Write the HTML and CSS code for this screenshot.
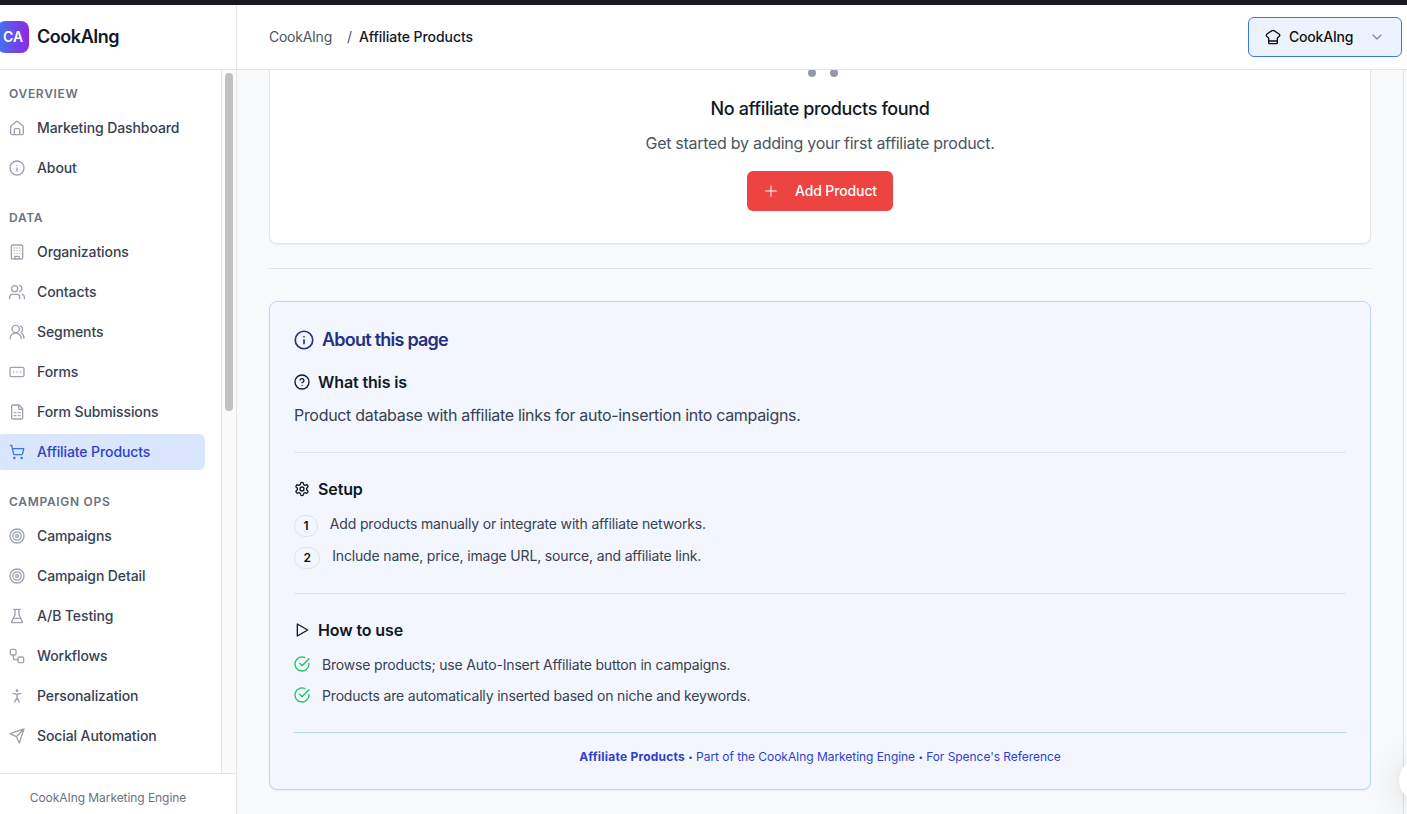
FILE: index.html
```html
<!DOCTYPE html>
<html lang="en">
<head>
<meta charset="utf-8">
<title>Affiliate Products</title>
<link rel="stylesheet" href="styles.css">
</head>
<body>
<svg class="defs" width="0" height="0">
  <symbol id="home" viewBox="0 0 24 24"><path d="M2.500 10.200a2 2 0 0 1 .8-1.6l7.500-6.200a2 2 0 0 1 2.400 0l7.500 6.200a2 2 0 0 1 .8 1.600V20a2 2 0 0 1-2 2h-15a2 2 0 0 1-2-2zM8 22v-7.500a1.500 1.500 0 0 1 1.500-1.500h5a1.500 1.500 0 0 1 1.500 1.500V22"/></symbol>
  <symbol id="info" viewBox="0 0 24 24"><circle cx="12" cy="12" r="10.500"/><path d="M12 16.500V12M12 8h.01"/></symbol>
  <symbol id="building" viewBox="0 0 24 24"><rect x="3.500" y="1.500" width="17" height="21" rx="2"/><path d="M9 22v-3.500h6V22M8 6h.01M12 6h.01M16 6h.01M8 10h.01M12 10h.01M16 10h.01M8 14h.01M12 14h.01M16 14h.01"/></symbol>
  <symbol id="users" viewBox="0 0 24 24"><path d="M16 22v-2.500a4 4 0 0 0-4-4H5a4 4 0 0 0-4 4V22M23 22v-2.500a4 4 0 0 0-3-3.870M16 2.500a4.500 4.500 0 0 1 0 8.700"/><circle cx="8.500" cy="7" r="4.500"/></symbol>
  <symbol id="segments" viewBox="0 0 24 24"><path d="M18.500 22a8.500 8.500 0 0 0-17 0M22.500 21.500c0-3.870-2-7-4.500-9a5.500 5.500 0 0 0-.450-9.300"/><circle cx="10" cy="7.500" r="5.500"/></symbol>
  <symbol id="form" viewBox="0 0 24 24"><rect x="1.500" y="5" width="21" height="14" rx="2"/><path d="M7 12h.01M12 12h.01M17 12h.01"/></symbol>
  <symbol id="sheet" viewBox="0 0 24 24"><path d="M15 1.500H6a2 2 0 0 0-2 2v17a2 2 0 0 0 2 2h12.500a2 2 0 0 0 2-2V7zM14.500 2v4a2 2 0 0 0 2 2h4M8 13h2.500M14 13h2.500M8 17.500h2.500M14 17.500h2.500"/></symbol>
  <symbol id="cart" viewBox="0 0 24 24"><circle cx="8" cy="21" r="1"/><circle cx="19" cy="21" r="1"/><path d="M2.050 2.050h2l2.660 12.420a2 2 0 0 0 2 1.580h9.780a2 2 0 0 0 1.950-1.570l1.650-7.430H5.120"/></symbol>
  <symbol id="target" viewBox="0 0 24 24"><circle cx="12" cy="12" r="10.500"/><circle cx="12" cy="12" r="6.300"/><circle cx="12" cy="12" r="2.100"/></symbol>
  <symbol id="flask" viewBox="0 0 24 24"><path d="M9 2v8L4 20.500a1 1 0 0 0 1 1.500h14a1 1 0 0 0 1-1.500L15 10V2M7 2h10M7 15.500h10"/></symbol>
  <symbol id="workflow" viewBox="0 0 24 24"><rect x="2" y="2" width="8.500" height="8.500" rx="2"/><path d="M6.500 10.500v4a3 3 0 0 0 3 3h4"/><rect x="13.500" y="13.500" width="8.500" height="8.500" rx="2"/></symbol>
  <symbol id="person" viewBox="0 0 24 24"><circle cx="12" cy="4" r="1"/><path d="m6 8 6 1.500L18 8M12 9.500v5M8.500 21l.5-1 3-5.500 3 5.500.5 1"/></symbol>
  <symbol id="send" viewBox="0 0 24 24"><path d="M22.500 1.500 15.500 22.500l-4.500-9.500-9.500-4.500zM22.500 1.500 11 13"/></symbol>
  <symbol id="chef" viewBox="0 0 24 24"><path d="M5.500 18v-4.500L2.500 11a2.500 2.500 0 0 1 .5-3.500L10 2.800a3.500 3.500 0 0 1 4 0l7 4.700a2.500 2.500 0 0 1 .5 3.500l-3 2.500V18zM5.500 18v2.500a1.500 1.500 0 0 0 1.500 1.500h10a1.500 1.500 0 0 0 1.500-1.500V18"/></symbol>
  <symbol id="chevron" viewBox="0 0 24 24"><path d="m6 9 6 6 6-6"/></symbol>
  <symbol id="plus" viewBox="0 0 24 24"><path d="M4 12h16M12 4v16"/></symbol>
  <symbol id="help" viewBox="0 0 24 24"><circle cx="12" cy="12" r="10.500"/><path d="M9.090 9a3 3 0 0 1 5.830 1c0 2-3 3-3 3M12 17h.01"/></symbol>
  <symbol id="gear" viewBox="0 0 24 24"><path d="M12.220 2h-.440a2 2 0 0 0-2 2v.180a2 2 0 0 1-1 1.730l-.430.250a2 2 0 0 1-2 0l-.150-.080a2 2 0 0 0-2.730.730l-.220.380a2 2 0 0 0 .730 2.730l.150.100a2 2 0 0 1 1 1.720v.510a2 2 0 0 1-1 1.740l-.150.090a2 2 0 0 0-.730 2.730l.220.380a2 2 0 0 0 2.730.730l.150-.080a2 2 0 0 1 2 0l.430.250a2 2 0 0 1 1 1.730V20a2 2 0 0 0 2 2h.440a2 2 0 0 0 2-2v-.180a2 2 0 0 1 1-1.730l.430-.250a2 2 0 0 1 2 0l.150.080a2 2 0 0 0 2.730-.730l.220-.390a2 2 0 0 0-.730-2.730l-.150-.080a2 2 0 0 1-1-1.740v-.500a2 2 0 0 1 1-1.740l.150-.090a2 2 0 0 0 .730-2.730l-.220-.380a2 2 0 0 0-2.730-.730l-.150.080a2 2 0 0 1-2 0l-.430-.250a2 2 0 0 1-1-1.730V4a2 2 0 0 0-2-2z"/><circle cx="12" cy="12" r="3"/></symbol>
  <symbol id="play" viewBox="0 0 24 24"><path d="M5 3v18l15.500-9z"/></symbol>
  <symbol id="check" viewBox="0 0 24 24"><path d="M22.500 11v1a10.500 10.500 0 1 1-6.200-9.600M22.500 4 12 14.500l-3.500-3.500"/></symbol>
</svg>
<div class="app">
  <div class="strip"></div>
  <aside class="sidebar">
    <div class="brand"><span class="logo">CA</span><span class="brand-name">CookAIng</span></div>
    <div class="nav-wrap">
      <nav class="nav">
        <section class="group">
          <h2 class="label">OVERVIEW</h2>
          <a class="item"><svg class="icon"><use href="#home"/></svg>Marketing Dashboard</a>
          <a class="item"><svg class="icon"><use href="#info"/></svg>About</a>
        </section>
        <section class="group">
          <h2 class="label">DATA</h2>
          <a class="item"><svg class="icon"><use href="#building"/></svg>Organizations</a>
          <a class="item"><svg class="icon"><use href="#users"/></svg>Contacts</a>
          <a class="item"><svg class="icon"><use href="#segments"/></svg>Segments</a>
          <a class="item"><svg class="icon"><use href="#form"/></svg>Forms</a>
          <a class="item"><svg class="icon"><use href="#sheet"/></svg>Form Submissions</a>
          <a class="item active"><svg class="icon"><use href="#cart"/></svg>Affiliate Products</a>
        </section>
        <section class="group">
          <h2 class="label">CAMPAIGN OPS</h2>
          <a class="item"><svg class="icon"><use href="#target"/></svg>Campaigns</a>
          <a class="item"><svg class="icon"><use href="#target"/></svg>Campaign Detail</a>
          <a class="item"><svg class="icon"><use href="#flask"/></svg>A/B Testing</a>
          <a class="item"><svg class="icon"><use href="#workflow"/></svg>Workflows</a>
          <a class="item"><svg class="icon"><use href="#person"/></svg>Personalization</a>
          <a class="item"><svg class="icon"><use href="#send"/></svg>Social Automation</a>
        </section>
      </nav>
      <div class="track"><div class="thumb"></div></div>
    </div>
    <div class="side-foot">CookAIng Marketing Engine</div>
  </aside>
  <header class="topbar">
    <div class="crumbs"><span class="crumb">CookAIng</span><span class="slash">/</span><span class="current">Affiliate Products</span></div>
    <button class="switcher"><svg class="icon"><use href="#chef"/></svg><span class="switcher-name">CookAIng</span><svg class="icon chev"><use href="#chevron"/></svg></button>
  </header>
  <div class="body">
    <main class="main">
      <section class="empty">
        <svg class="empty-icon"><use href="#cart"/></svg>
        <h3 class="empty-title">No affiliate products found</h3>
        <p class="empty-text">Get started by adding your first affiliate product.</p>
        <button class="add"><svg class="icon"><use href="#plus"/></svg><span class="add-text">Add Product</span></button>
      </section>
      <div class="divider"></div>
      <section class="about">
        <h3 class="about-title"><svg class="icon big"><use href="#info"/></svg>About this page</h3>
        <div class="block">
          <h4 class="sub"><svg class="icon"><use href="#help"/></svg>What this is</h4>
          <p class="desc">Product database with affiliate links for auto-insertion into campaigns.</p>
        </div>
        <div class="block ruled">
          <h4 class="sub"><svg class="icon"><use href="#gear"/></svg>Setup</h4>
          <div class="list">
            <div class="row"><span class="num">1</span><span>Add products manually or integrate with affiliate networks.</span></div>
            <div class="row"><span class="num">2</span><span>Include name, price, image URL, source, and affiliate link.</span></div>
          </div>
        </div>
        <div class="block ruled">
          <h4 class="sub"><svg class="icon"><use href="#play"/></svg>How to use</h4>
          <div class="list">
            <div class="row"><svg class="icon tick"><use href="#check"/></svg><span>Browse products; use Auto-Insert Affiliate button in campaigns.</span></div>
            <div class="row"><svg class="icon tick"><use href="#check"/></svg><span>Products are automatically inserted based on niche and keywords.</span></div>
          </div>
        </div>
        <footer class="about-foot"><strong>Affiliate Products</strong> <span class="dot">•</span> Part of the CookAIng Marketing Engine <span class="dot">•</span> For Spence's Reference</footer>
      </section>
    </main>
    <div class="page-track"></div>
  </div>
  <div class="bubble"></div>
</div>
</body>
</html>
```
FILE: styles.css
```css
* { box-sizing: border-box; margin: 0; }
body { font-family: Inter, sans-serif; color: #111827; overflow: hidden; }
button { font: inherit; border: 0; }
.defs { position: absolute; }
.app {
  position: relative;
  display: grid;
  grid-template: 5px 65px 744px / 237px 1170px;
  width: 1407px; height: 814px;
  overflow: hidden;
}
.strip { grid-column: 1 / 3; background: #181821; }
.icon {
  width: 16px; height: 16px; flex: none;
  fill: none; stroke: currentColor; stroke-width: 2;
  stroke-linecap: round; stroke-linejoin: round;
}

.sidebar {
  grid-row: 2 / 4;
  display: flex; flex-direction: column;
  border-right: 1px solid #e2e4e9;
  background: #fff;
  overflow: hidden;
}
.brand {
  display: flex; align-items: center; gap: 8px;
  height: 65px; flex: none;
  border-bottom: 1px solid #e2e4e9;
}
.logo {
  width: 32px; height: 32px; margin-left: -3px;
  border-radius: 8px;
  background: linear-gradient(90deg, #3f76f2, #8f27e2);
  color: #fff; font-size: 14px; font-weight: 600; line-height: 32px; text-align: center;
}
.brand-name { padding-bottom: 2px; font-size: 18px; font-weight: 600; letter-spacing: -.45px; }
.nav-wrap { display: flex; flex: 1; min-height: 0; }
.nav {
  display: flex; flex-direction: column; gap: 23px;
  flex: 1; padding: 15px 16px 0 0;
}
.group { display: flex; flex-direction: column; gap: 4px; }
.label {
  height: 16px; margin-bottom: 5px; padding-left: 9px;
  font-size: 12px; line-height: 18px; font-weight: 600;
  letter-spacing: .7px; color: #6b7280;
}
.item {
  display: flex; align-items: center; gap: 12px;
  height: 36px; margin-left: -3px; padding-left: 12px;
  border-radius: 6px;
  font-size: 14px; line-height: 20px; font-weight: 500; letter-spacing: -.1px; color: #374151;
}
.item .icon { color: #9ca3af; }
.item.active { background: #d9e6fd; color: #2f3fcb; }
.item.active .icon { color: #3b76f0; }
.track {
  width: 15px; padding: 3px 2px 0 3px;
  border-left: 1px solid #e5e5e7; background: #fafafa;
}
.thumb { width: 8px; height: 338px; border-radius: 4px; background: #c1c1c1; }
.side-foot {
  height: 41px; flex: none; padding: 16px 20px 0 0;
  border-top: 1px solid #e2e4e9;
  font-size: 12px; line-height: 16px; letter-spacing: -.06px; text-align: center; color: #6b7280;
}

.topbar {
  display: flex; align-items: center; justify-content: space-between;
  padding: 0 5px 0 32px;
  border-bottom: 1px solid #e2e4e9; background: #fff;
}
.crumbs { display: flex; font-size: 14px; line-height: 20px; color: #4b5563; }
.crumb { letter-spacing: -.25px; }
.slash { margin: 0 7px 0 15px; }
.current { font-weight: 500; letter-spacing: -.06px; color: #111827; }
.switcher {
  display: flex; align-items: center; gap: 8px;
  width: 154px; height: 40px; padding: 0 16px;
  border: 1px solid #3b76f0; border-radius: 6px;
  background: #edf3fe; color: #111;
  font-size: 14px; line-height: 20px; font-weight: 500;
}
.switcher-name { letter-spacing: -.2px; }
.chev { margin-left: auto; color: #858c98; }

.body { display: flex; min-height: 0; background: #f8f9fb; overflow: hidden; }
.main { flex: 1; padding: 0 32px; }
.page-track { width: 4px; border-left: 1px solid #e5e5e7; background: #fafafa; }
.empty {
  display: flex; flex-direction: column; align-items: center;
  height: 174px;
  border: 1px solid #e2e4e9; border-top: 0; border-radius: 0 0 8px 8px;
  background: #fff; box-shadow: 0 1px 2px rgba(0, 0, 0, .06);
}
.empty-icon {
  width: 48px; height: 48px; margin-top: -39px; flex: none;
  fill: none; stroke: #9499a8; stroke-width: 2;
  clip-path: inset(39px 0 0 0);
}
.empty-title { margin-top: 16px; font-size: 18px; line-height: 28px; font-weight: 500; letter-spacing: -.37px; }
.empty-text { margin-top: 8px; font-size: 16px; line-height: 24px; letter-spacing: -.28px; color: #4b5563; }
.add {
  display: flex; align-items: center; gap: 16px;
  height: 40px; margin-top: 16px; padding: 0 16px;
  border-radius: 6px; background: #ee4441; color: #fff;
  font-size: 14px; line-height: 20px; font-weight: 500; letter-spacing: -.13px;
}
.add .icon { stroke-width: 1.6; }
.divider { height: 1px; margin: 24px 0 32px; background: #e2e4e9; }
.about {
  height: 489px; padding: 24px;
  border: 1px solid #bfd6fa; border-radius: 8px;
  background: #f3f6fe; box-shadow: 0 1px 2px rgba(0, 0, 0, .05);
}
.about-title {
  display: flex; align-items: center; gap: 8px;
  margin-bottom: 16px;
  font-size: 18px; line-height: 28px; font-weight: 600;
  letter-spacing: -.76px; color: #253180;
}
.big { width: 20px; height: 20px; }
.block { padding-bottom: 24px; }
.ruled { padding-top: 24px; border-top: 1px solid #e2e3e8; }
.sub {
  display: flex; align-items: center; gap: 8px;
  font-size: 16px; line-height: 24px; font-weight: 600; letter-spacing: -.12px;
}
.desc { margin-top: 8px; font-size: 16px; line-height: 26px; letter-spacing: -.31px; color: #374151; }
.list { display: flex; flex-direction: column; gap: 8px; margin-top: 12px; }
.row {
  display: flex; align-items: flex-start; gap: 12px;
  font-size: 14px; line-height: 22.75px; letter-spacing: -.17px; color: #374151;
}
.num {
  margin-top: 2px; padding: 2px 8.400px;
  border: 1px solid #e2e3e8; border-radius: 11px;
  font-size: 12px; line-height: 16px; font-weight: 600; letter-spacing: 0; color: #111;
}
.tick { margin-top: 2px; color: #22c05e; }
.about-foot {
  padding-top: 16px; border-top: 1px solid #b8d5fb;
  font-size: 12px; line-height: 16px; letter-spacing: -.05px; text-align: center; color: #2f3fcb;
}
.about-foot strong { font-weight: 700; letter-spacing: .22px; }
.dot { font-size: 8px; line-height: 8px; vertical-align: 1px; }
.bubble {
  position: absolute; left: 1399px; top: 758px;
  width: 44px; height: 44px; border-radius: 50%;
  background: #fff; box-shadow: 0 4px 40px rgba(0, 0, 0, .12), 0 1px 6px rgba(0, 0, 0, .05);
}
```
